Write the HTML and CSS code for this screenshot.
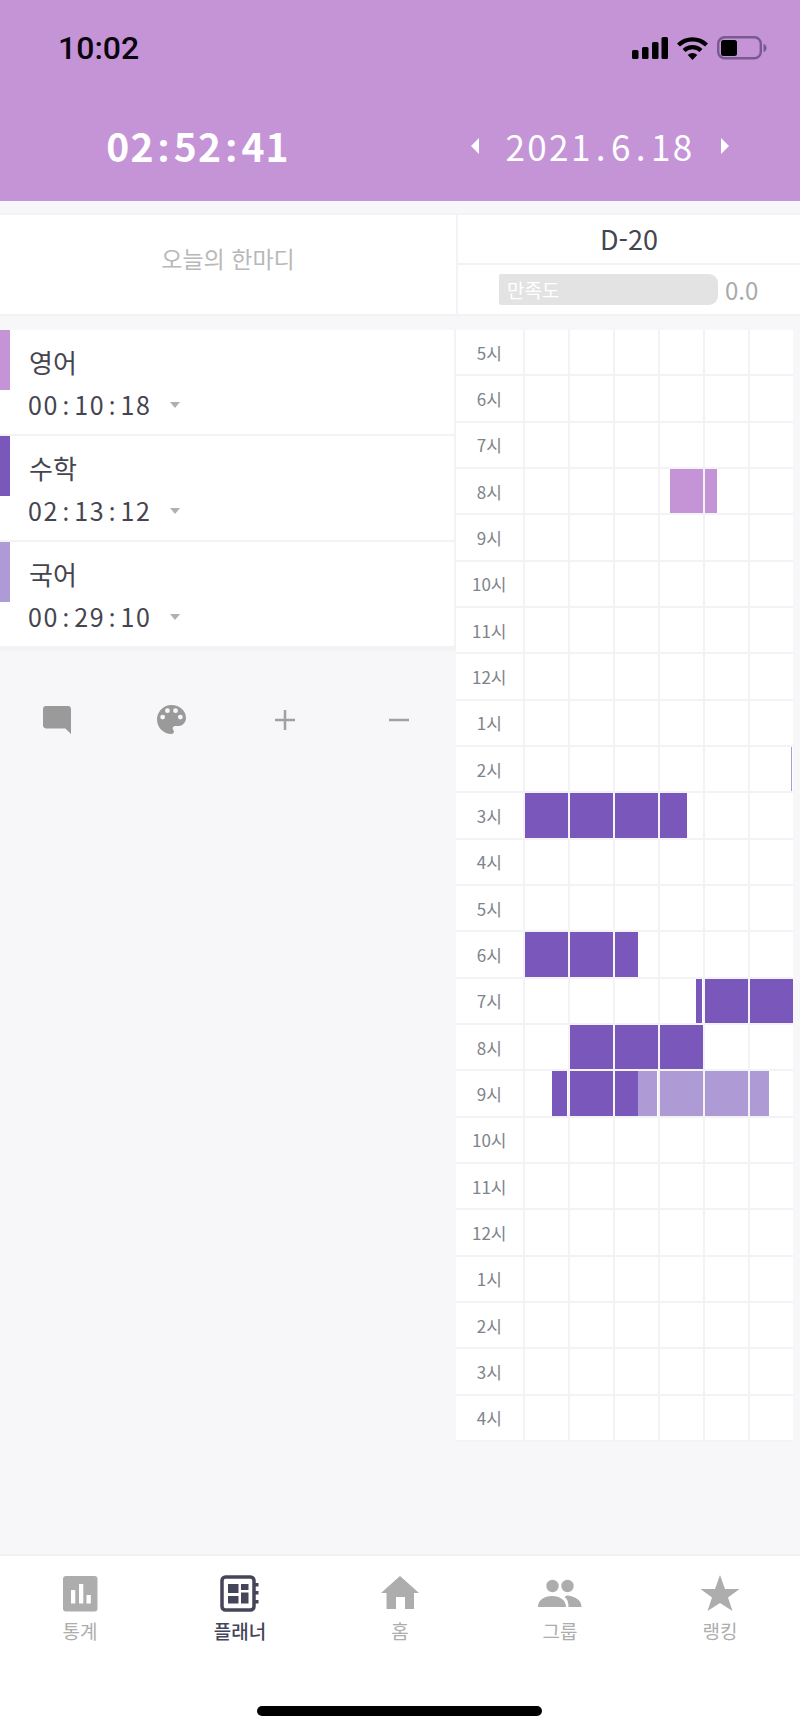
FILE: index.html
```html
<!DOCTYPE html>
<html lang="ko">
<head>
<meta charset="utf-8">
<title>플래너</title>
<link rel="stylesheet" href="styles.css">
</head>
<body>
<header class="header">
  <div class="status">
    <span class="clock">10:02</span>
    <div class="status-icons">
      <svg class="signal" width="36" height="23" viewBox="0 0 36 23"><rect x="0" y="13" width="6.5" height="9" rx="1.5"/><rect x="10" y="10" width="6.5" height="12" rx="1.5"/><rect x="20" y="5" width="6.5" height="17" rx="1.5"/><rect x="29.5" y="0" width="6.5" height="22" rx="1.5"/></svg>
      <svg class="wifi" width="31" height="23" viewBox="0 0 31 23"><path class="arc" d="M1.5 8A20 20 0 0 1 29.5 8"/><path class="arc" d="M7 13.5A12.5 12.5 0 0 1 24 13.5"/><path d="M10.7 18L15.5 23L20.3 18A7 7 0 0 0 10.7 18Z"/></svg>
      <svg class="battery" width="51" height="24" viewBox="0 0 51 24"><rect class="shell" x="1.2" y="1.2" width="42.6" height="21" rx="6.5"/><rect x="4" y="4" width="16" height="16" rx="2.5"/><path class="cap" d="M46.5 8c2 .6 3 2 3 4s-1 3.400-3 4z"/></svg>
    </div>
  </div>
  <div class="timer-row">
    <div class="timer">02<span class="sep">:</span>52<span class="sep">:</span>41</div>
    <div class="date">
      <span class="arrow arrow-left"></span>
      <span class="date-text">2021<span class="dot">.</span>6<span class="dot">.</span>18</span>
      <span class="arrow arrow-right"></span>
    </div>
  </div>
</header>

<section class="summary">
  <div class="motto">오늘의 한마디</div>
  <div class="goal">
    <div class="dday">D-20</div>
    <div class="rating">
      <div class="rating-bar">만족도</div>
      <span class="rating-value">0.0</span>
    </div>
  </div>
</section>

<main class="main">
  <div class="left">
    <ul class="subjects">
      <li class="subject">
        <span class="swatch pink"></span>
        <div class="subject-name">영어</div>
        <div class="subject-time"><span>00<span class="sep">:</span>10<span class="sep">:</span>18</span><i class="caret"></i></div>
      </li>
      <li class="subject">
        <span class="swatch math"></span>
        <div class="subject-name">수학</div>
        <div class="subject-time"><span>02<span class="sep">:</span>13<span class="sep">:</span>12</span><i class="caret"></i></div>
      </li>
      <li class="subject">
        <span class="swatch lilac"></span>
        <div class="subject-name">국어</div>
        <div class="subject-time"><span>00<span class="sep">:</span>29<span class="sep">:</span>10</span><i class="caret"></i></div>
      </li>
    </ul>
    <div class="actions">
      <svg width="28" height="28" viewBox="2 2 20 20"><path d="M21.99 4c0-1.100-.89-2-1.990-2H4c-1.100 0-2 .9-2 2v12c0 1.100.9 2 2 2h14l4 4-.01-18z"/></svg>
      <svg width="29" height="29" viewBox="3 3 18 18"><path fill-rule="evenodd" d="M12 3a9 9 0 0 0 0 18c.83 0 1.500-.67 1.500-1.500 0-.39-.15-.74-.39-1.010-.23-.26-.38-.61-.38-.99 0-.83.67-1.500 1.500-1.500H16c2.760 0 5-2.240 5-5 0-4.420-4.030-8-9-8zm-5.500 9a1.500 1.500 0 1 1 0-3 1.500 1.500 0 0 1 0 3zm3-4a1.500 1.500 0 1 1 0-3 1.500 1.500 0 0 1 0 3zm5 0a1.500 1.500 0 1 1 0-3 1.500 1.500 0 0 1 0 3zm3 4a1.500 1.500 0 1 1 0-3 1.500 1.500 0 0 1 0 3z"/></svg>
      <svg class="thin" width="20" height="20" viewBox="0 0 20 20"><path d="M10 0v20M0 10h20"/></svg>
      <svg class="thin" width="20" height="20" viewBox="0 0 20 20"><path d="M0 10h20"/></svg>
    </div>
  </div>

  <div class="hours">
    <div class="hour"><span class="label">5시</span><div class="c"></div><div class="c"></div><div class="c"></div><div class="c"></div><div class="c"></div><div class="c"></div></div>
    <div class="hour"><span class="label">6시</span><div class="c"></div><div class="c"></div><div class="c"></div><div class="c"></div><div class="c"></div><div class="c"></div></div>
    <div class="hour"><span class="label">7시</span><div class="c"></div><div class="c"></div><div class="c"></div><div class="c"></div><div class="c"></div><div class="c"></div></div>
    <div class="hour"><span class="label">8시</span><div class="c"></div><div class="c"></div><div class="c"></div><div class="c"><i class="pink" style="margin-left:25%;width:75%"></i></div><div class="c"><i class="pink" style="width:28%"></i></div><div class="c"></div></div>
    <div class="hour"><span class="label">9시</span><div class="c"></div><div class="c"></div><div class="c"></div><div class="c"></div><div class="c"></div><div class="c"></div></div>
    <div class="hour"><span class="label">10시</span><div class="c"></div><div class="c"></div><div class="c"></div><div class="c"></div><div class="c"></div><div class="c"></div></div>
    <div class="hour"><span class="label">11시</span><div class="c"></div><div class="c"></div><div class="c"></div><div class="c"></div><div class="c"></div><div class="c"></div></div>
    <div class="hour"><span class="label">12시</span><div class="c"></div><div class="c"></div><div class="c"></div><div class="c"></div><div class="c"></div><div class="c"></div></div>
    <div class="hour"><span class="label">1시</span><div class="c"></div><div class="c"></div><div class="c"></div><div class="c"></div><div class="c"></div><div class="c"></div></div>
    <div class="hour"><span class="label">2시</span><div class="c"></div><div class="c"></div><div class="c"></div><div class="c"></div><div class="c"></div><div class="c"><i class="lilac" style="margin-left:97%;width:3%"></i></div></div>
    <div class="hour"><span class="label">3시</span><div class="c"><i class="math" style="width:100%"></i></div><div class="c"><i class="math" style="width:100%"></i></div><div class="c"><i class="math" style="width:100%"></i></div><div class="c"><i class="math" style="width:65%"></i></div><div class="c"></div><div class="c"></div></div>
    <div class="hour"><span class="label">4시</span><div class="c"></div><div class="c"></div><div class="c"></div><div class="c"></div><div class="c"></div><div class="c"></div></div>
    <div class="hour"><span class="label">5시</span><div class="c"></div><div class="c"></div><div class="c"></div><div class="c"></div><div class="c"></div><div class="c"></div></div>
    <div class="hour"><span class="label">6시</span><div class="c"><i class="math" style="width:100%"></i></div><div class="c"><i class="math" style="width:100%"></i></div><div class="c"><i class="math" style="width:55%"></i></div><div class="c"></div><div class="c"></div><div class="c"></div></div>
    <div class="hour"><span class="label">7시</span><div class="c"></div><div class="c"></div><div class="c"></div><div class="c"><i class="math" style="margin-left:85%;width:15%"></i></div><div class="c"><i class="math" style="width:100%"></i></div><div class="c"><i class="math" style="width:100%"></i></div></div>
    <div class="hour"><span class="label">8시</span><div class="c"></div><div class="c"><i class="math" style="width:100%"></i></div><div class="c"><i class="math" style="width:100%"></i></div><div class="c"><i class="math" style="width:100%"></i></div><div class="c"></div><div class="c"></div></div>
    <div class="hour"><span class="label">9시</span><div class="c"><i class="math" style="margin-left:63%;width:37%"></i></div><div class="c"><i class="math" style="width:100%"></i></div><div class="c"><i class="math" style="width:55%"></i><i class="lilac" style="width:45%"></i></div><div class="c"><i class="lilac" style="width:100%"></i></div><div class="c"><i class="lilac" style="width:100%"></i></div><div class="c"><i class="lilac" style="width:46%"></i></div></div>
    <div class="hour"><span class="label">10시</span><div class="c"></div><div class="c"></div><div class="c"></div><div class="c"></div><div class="c"></div><div class="c"></div></div>
    <div class="hour"><span class="label">11시</span><div class="c"></div><div class="c"></div><div class="c"></div><div class="c"></div><div class="c"></div><div class="c"></div></div>
    <div class="hour"><span class="label">12시</span><div class="c"></div><div class="c"></div><div class="c"></div><div class="c"></div><div class="c"></div><div class="c"></div></div>
    <div class="hour"><span class="label">1시</span><div class="c"></div><div class="c"></div><div class="c"></div><div class="c"></div><div class="c"></div><div class="c"></div></div>
    <div class="hour"><span class="label">2시</span><div class="c"></div><div class="c"></div><div class="c"></div><div class="c"></div><div class="c"></div><div class="c"></div></div>
    <div class="hour"><span class="label">3시</span><div class="c"></div><div class="c"></div><div class="c"></div><div class="c"></div><div class="c"></div><div class="c"></div></div>
    <div class="hour"><span class="label">4시</span><div class="c"></div><div class="c"></div><div class="c"></div><div class="c"></div><div class="c"></div><div class="c"></div></div>
  </div>
</main>

<nav class="nav">
  <div class="tabs">
    <a class="tab">
      <svg width="40" height="38" viewBox="0 0 40 38"><rect x="3" y="1" width="34.500" height="35.500" rx="3"/><rect class="cut" x="11" y="15" width="4.300" height="13.500"/><rect class="cut" x="19" y="9" width="4.300" height="19.500"/><rect class="cut" x="26.500" y="20" width="4.300" height="8.500"/></svg>
      <span>통계</span>
    </a>
    <a class="tab active">
      <svg width="40" height="38" viewBox="0 0 40 38"><rect x="2" y="2" width="32" height="33" rx="3.500" fill="none" stroke="#45455a" stroke-width="3.500"/><path d="M34 8h4.500v3.500H34zM34 16h4.500v3.500H34zM34 25h4.500v3.500H34z"/><rect x="8" y="9" width="10.500" height="9"/><rect x="8" y="21" width="10.500" height="7.500"/><rect x="21" y="9" width="7.500" height="6"/><rect x="21" y="17.500" width="7.500" height="11"/></svg>
      <span>플래너</span>
    </a>
    <a class="tab">
      <svg width="40" height="38" viewBox="0 0 40 38"><path d="M20 1L39 18H34V34H25V22H16V34H6.500V18H1Z"/></svg>
      <span>홈</span>
    </a>
    <a class="tab">
      <svg width="46" height="38" viewBox="0 0 46 38"><circle cx="15.500" cy="11" r="6.200"/><circle cx="30.500" cy="11" r="6.200"/><path d="M1 32c0-7 6-11 14-11s14 4 14 11zM29.500 20.500c8 .5 15 4 15 11.500h-13c0-4.500-1-8-4-10z"/></svg>
      <span>그룹</span>
    </a>
    <a class="tab">
      <svg width="40" height="38" viewBox="0 0 40 38"><path d="M20 0L25 14H39.500L28 22.500L32.500 36L20 28L7.500 36L12 22.500L.5 14H15Z"/></svg>
      <span>랭킹</span>
    </a>
  </div>
  <div class="home-indicator"></div>
</nav>
</body>
</html>
```
FILE: styles.css
```css
* { box-sizing: border-box; }
html, body { margin: 0; padding: 0; }
body {
  width: 800px;
  height: 1731px;
  overflow: hidden;
  display: flex;
  flex-direction: column;
  background: #f7f7f9;
  font-family: "Noto Sans CJK KR", "Noto Sans", sans-serif;
  color: #45454f;
}
.sep { font-family: "Noto Sans", sans-serif; margin: 0 3.5px; }

/* header */
.header {
  height: 201px;
  background: #c494d6;
  display: flex;
  flex-direction: column;
}
.status {
  display: flex;
  justify-content: space-between;
  align-items: center;
  padding: 30px 32px 0 58px;
  height: 66px;
}
.clock {
  font-family: Roboto, sans-serif;
  font-weight: 500;
  font-size: 32px;
  line-height: 36px;
  color: #0c0510;
}
.status-icons { display: flex; align-items: center; gap: 9px; }
.status-icons svg { display: block; fill: #000; }
.wifi .arc { fill: none; stroke: #000; stroke-width: 4.2; }
.battery .shell { fill: none; stroke: #7a5a8e; stroke-width: 2.4; }
.battery .cap { fill: #7a5a8e; }
.timer-row {
  flex: 1;
  display: grid;
  grid-template-columns: 396px 1fr;
  align-items: center;
  padding-top: 25px;
}
.timer {
  text-align: center;
  color: #fff;
  font-weight: 700;
  font-size: 39px;
  line-height: 48px;
  letter-spacing: 1.2px;
}
.date {
  display: flex;
  justify-content: center;
  align-items: center;
  gap: 26px;
  color: #fff;
  padding-left: 4px;
}
.date-text { font-size: 35px; line-height: 44px; letter-spacing: 2.4px; }
.dot { margin: 0 3px; }
.arrow { width: 0; height: 0; border-style: solid; border-color: transparent; }
.arrow-left { border-width: 8px 8px 8px 0; border-right-color: #fff; }
.arrow-right { border-width: 8px 0 8px 8px; border-left-color: #fff; }

/* summary */
.summary {
  margin-top: 12px;
  height: 103px;
  display: grid;
  grid-template-columns: 456px 1fr;
  background: #fff;
  border-top: 2px solid #f3f3f5;
  border-bottom: 2px solid #f3f3f5;
}
.motto {
  display: flex;
  align-items: center;
  justify-content: center;
  font-size: 23px;
  color: #b8b8b8;
  padding-bottom: 13px;
}
.goal {
  display: flex;
  flex-direction: column;
  border-left: 2px solid #f3f3f5;
}
.dday {
  height: 50px;
  display: flex;
  align-items: center;
  justify-content: center;
  font-size: 27px;
  border-bottom: 2px solid #f3f3f5;
  padding-bottom: 2px;
}
.rating {
  flex: 1;
  display: flex;
  align-items: center;
  gap: 7px;
  padding-left: 41px;
}
.rating-bar {
  width: 219px;
  height: 31px;
  background: #e3e3e3;
  border-radius: 2px 9px 9px 2px;
  padding-left: 8px;
  color: #fff;
  font-size: 19px;
  line-height: 31px;
}
.rating-value { font-size: 24px; color: #aaa; }

/* main */
.main {
  margin-top: 14px;
  display: flex;
  align-items: flex-start;
}
.left { width: 456px; }
.subjects {
  list-style: none;
  margin: 0;
  padding: 0;
  background: #fff;
  box-shadow: 0 2px 2px #f0f0f2;
  border-right: 2px solid #f3f3f5;
}
.subject {
  height: 106px;
  padding: 0 0 0 29px;
  display: flex;
  flex-direction: column;
  position: relative;
  border-bottom: 2px solid #f3f3f5;
}
.swatch {
  position: absolute;
  left: 0;
  top: 0;
  width: 9.5px;
  height: 60px;
}
.subject-name {
  margin-top: 14px;
  font-size: 26px;
  line-height: 36px;
}
.subject-time {
  margin-top: 6px;
  margin-left: -1px;
  display: flex;
  align-items: center;
  gap: 19px;
  font-size: 25px;
  line-height: 36px;
  letter-spacing: 1.6px;
}
.caret {
  width: 0;
  height: 0;
  border-style: solid;
  border-width: 6px 5.500px 0 5.500px;
  border-color: #b0b0b0 transparent transparent;
}
.pink { background: #c494d6; }
.math { background: #7a58bb; }
.lilac { background: #ae9bd6; }

.actions {
  margin-top: 57px;
  display: grid;
  grid-template-columns: repeat(4, 114px);
  justify-items: center;
  align-items: center;
}
.actions svg { display: block; fill: #9a9a9a; }
.actions .thin { fill: none; stroke: #a0a0a0; stroke-width: 2.500; }

/* hour grid */
.hours { width: 337px; display: flex; flex-direction: column; }
.hour {
  height: 46.33px;
  display: grid;
  grid-template-columns: 66.5px repeat(6, 45px);
  background: #fff;
  border-bottom: 2px solid #f3f3f6;
}
.label {
  display: flex;
  align-items: center;
  justify-content: center;
  font-size: 17px;
  color: #7e8489;
}
.c {
  display: flex;
  border-left: 2px solid #f3f3f6;
}
.c i { display: block; }

/* nav */
.nav {
  margin-top: auto;
  height: 177px;
  background: #fff;
  border-top: 2px solid #f1f1f3;
  display: flex;
  flex-direction: column;
}
.tabs {
  display: grid;
  grid-template-columns: repeat(5, 160px);
  padding-top: 19px;
}
.tab {
  display: flex;
  flex-direction: column;
  align-items: center;
  color: #adadad;
  font-size: 19px;
  line-height: 28px;
  gap: 4px;
}
.tab svg { display: block; fill: #adadad; }
.tab .cut { fill: #fff; }
.tab.active { color: #45455a; font-weight: 500; }
.tab.active svg { fill: #45455a; }
.home-indicator {
  width: 285px;
  height: 10px;
  margin: 61px auto 0 257px;
  background: #000;
  border-radius: 5px;
}
```
